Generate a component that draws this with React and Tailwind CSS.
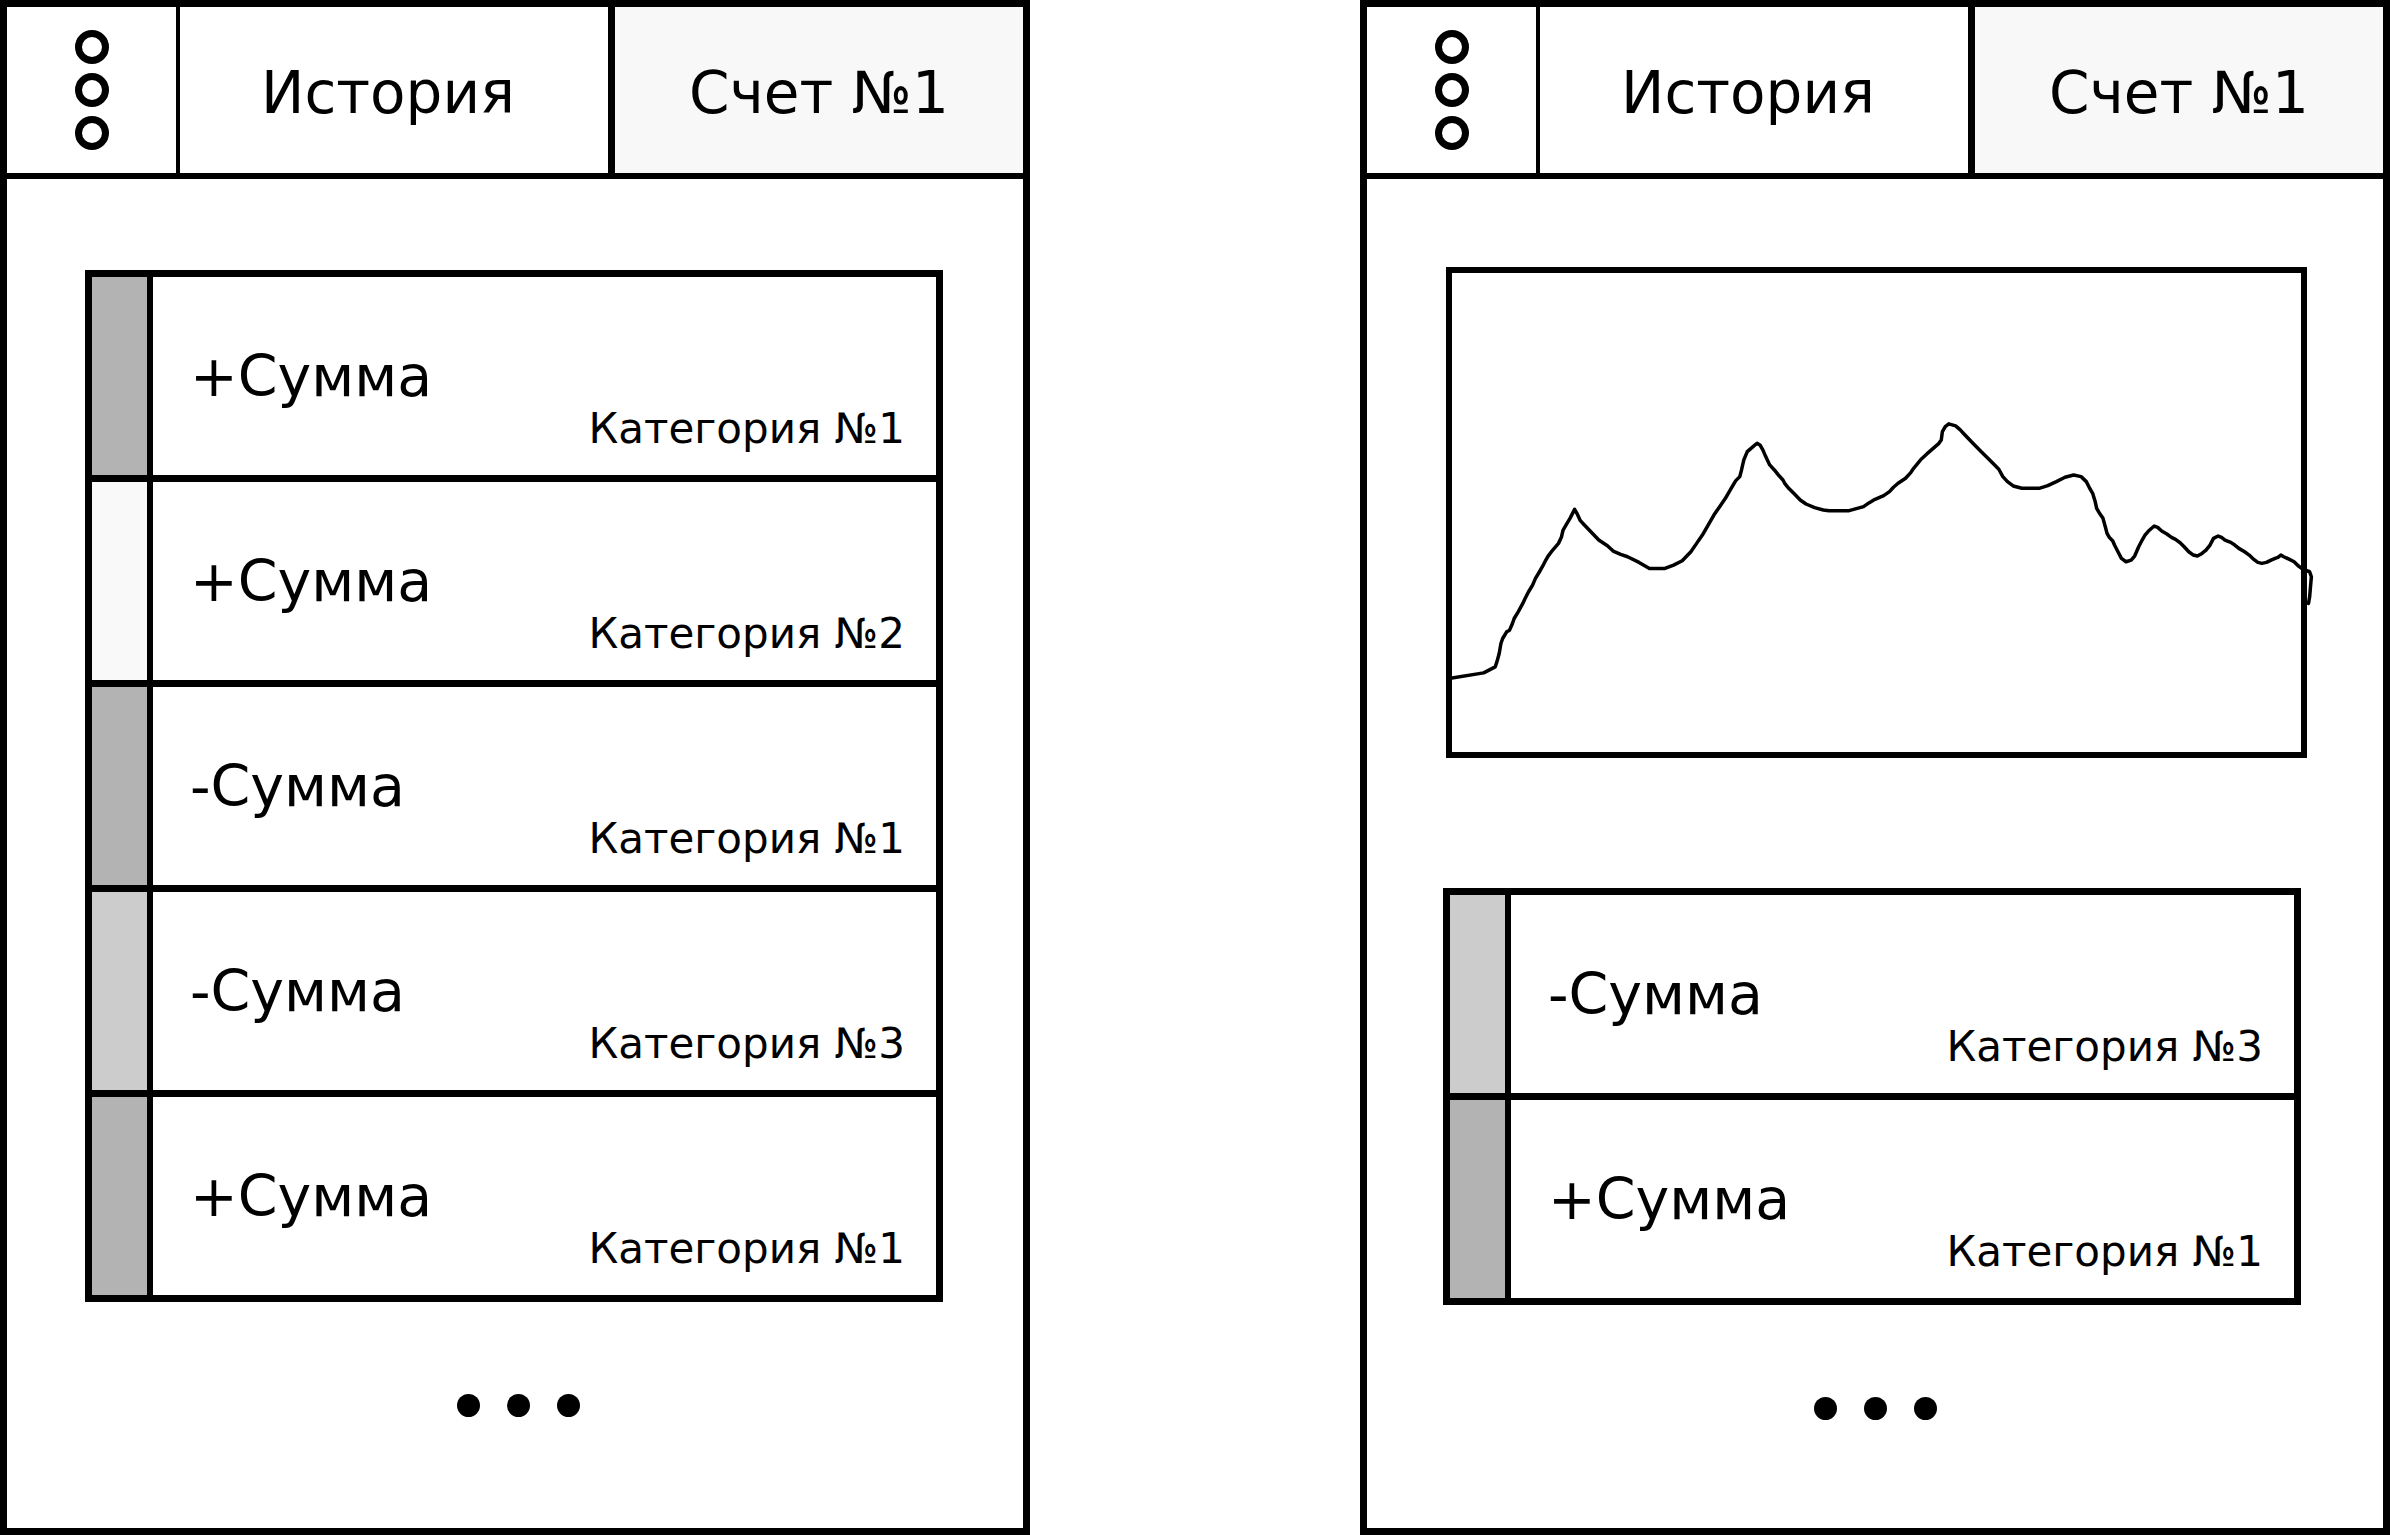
const font = { fontFamily: '"DejaVu Sans", Verdana, sans-serif' };

// points traced from the mockup, in the chart's own coordinate box
const chartPoints = [
  [55, 1283], [110, 1268], [130, 1250], [133, 1235], [137, 1210], [140, 1180], [143, 1165], [150, 1145],
  [155, 1140], [160, 1120], [163, 1105], [170, 1085], [178, 1060], [182, 1045], [188, 1025], [195, 1005],
  [200, 985], [207, 965], [212, 950], [218, 930], [222, 918], [230, 900], [240, 880], [245, 862],
  [248, 840], [253, 825], [260, 805], [268, 778], [272, 790], [278, 812], [285, 825], [300, 852],
  [310, 870], [325, 887], [335, 903], [348, 913], [360, 920], [380, 937], [398, 955], [425, 955],
  [440, 945], [455, 932], [470, 905], [480, 880], [490, 855], [500, 825], [510, 795], [520, 770],
  [530, 745], [540, 715], [548, 692], [555, 680], [558, 660], [562, 630], [568, 605], [578, 590],
  [585, 580], [590, 585], [595, 600], [600, 620], [607, 645], [615, 660], [622, 675], [630, 690],
  [633, 700], [640, 715], [650, 732], [660, 750], [670, 762], [685, 773], [700, 780], [710, 782],
  [745, 782], [770, 770], [780, 758], [790, 748], [805, 737], [815, 725], [822, 712], [830, 700],
  [843, 685], [852, 668], [857, 655], [862, 645], [870, 628], [880, 612], [890, 597], [900, 582],
  [905, 570], [907, 545], [912, 530], [918, 522], [930, 528], [938, 540], [945, 553], [960, 580],
  [975, 606], [990, 632], [1005, 658], [1012, 680], [1020, 695], [1030, 708], [1045, 715], [1075, 715],
  [1090, 707], [1105, 695], [1120, 682], [1135, 675], [1148, 680], [1157, 695], [1162, 712], [1168, 730],
  [1172, 752], [1175, 775], [1180, 790], [1186, 805], [1190, 830], [1193, 850], [1197, 862], [1203, 873],
  [1206, 885], [1212, 905], [1218, 925], [1226, 935], [1235, 930], [1241, 918], [1248, 890], [1254, 870],
  [1259, 855], [1265, 843], [1275, 828], [1281, 832], [1288, 843], [1297, 852], [1305, 862], [1312, 868],
  [1320, 878], [1327, 890], [1335, 905], [1343, 915], [1350, 918], [1358, 910], [1365, 900], [1372, 885],
  [1378, 865], [1386, 858], [1392, 862], [1398, 870], [1408, 877], [1415, 885], [1422, 895], [1432, 905],
  [1440, 915], [1448, 928], [1455, 937], [1462, 940], [1470, 937], [1478, 930], [1485, 925], [1490, 922],
  [1495, 915], [1500, 920], [1510, 928], [1518, 935], [1525, 947], [1533, 957], [1545, 965], [1548, 980],
  [1545, 1040], [1543, 1060],
];

const leftRows = [
  { amount: "+Сумма", category: "Категория №1", color: "bg-[#b3b3b3]" },
  { amount: "+Сумма", category: "Категория №2", color: "bg-[#f9f9f9]" },
  { amount: "-Сумма", category: "Категория №1", color: "bg-[#b3b3b3]" },
  { amount: "-Сумма", category: "Категория №3", color: "bg-[#cccccc]" },
  { amount: "+Сумма", category: "Категория №1", color: "bg-[#b3b3b3]" },
];

const rightRows = [
  { amount: "-Сумма", category: "Категория №3", color: "bg-[#cccccc]" },
  { amount: "+Сумма", category: "Категория №1", color: "bg-[#b3b3b3]" },
];

function MenuIcon() {
  return (
    <div className="flex flex-col items-center gap-[9px]">
      <span className="w-[34px] h-[34px] rounded-full border-[7px] border-black" />
      <span className="w-[34px] h-[34px] rounded-full border-[7px] border-black" />
      <span className="w-[34px] h-[34px] rounded-full border-[7px] border-black" />
    </div>
  );
}

function Header() {
  return (
    <div className="flex h-[172px] border-b-[6px] border-black shrink-0">
      <div className="w-[173px] border-r-[4px] border-black flex items-center justify-center">
        <MenuIcon />
      </div>
      <div className="flex-1 border-r-[7px] border-black flex items-center justify-center pt-[6px] pr-[12px]">
        <span className="text-[58px] leading-none">История</span>
      </div>
      <div className="w-[408px] bg-[#f8f8f8] flex items-center justify-center pt-[6px] shadow-[0_2px_0_0_#000]">
        <span className="text-[58px] leading-none">Счет №1</span>
      </div>
    </div>
  );
}

function Row({ row, first }) {
  return (
    <div className={`flex h-[198px] ${first ? "" : "border-t-[7px] border-black"} box-content`}>
      <div className={`w-[61px] shrink-0 border-r-[6px] border-black ${row.color}`} />
      <div className="flex-1 flex flex-col justify-between pt-[71px] pb-[25px] pl-[37px] pr-[31px]">
        <span className="text-[57px] leading-none">{row.amount}</span>
        <span className="text-[42px] leading-none self-end">{row.category}</span>
      </div>
    </div>
  );
}

function Card({ rows }) {
  return (
    <div className="w-[858px] border-[7px] border-black">
      {rows.map((row, i) => (
        <Row key={i} row={row} first={i === 0} />
      ))}
    </div>
  );
}

function Dots() {
  return (
    <div className="flex justify-center gap-[27px]">
      <span className="w-[23px] h-[23px] rounded-full bg-black" />
      <span className="w-[23px] h-[23px] rounded-full bg-black" />
      <span className="w-[23px] h-[23px] rounded-full bg-black" />
    </div>
  );
}

function Chart() {
  const pts = chartPoints.map((p) => p.join(",")).join(" ");
  return (
    <div className="w-[861px] h-[491px] border-[6px] border-black ml-px">
      <svg
        className="block w-full h-full overflow-visible"
        viewBox="55 70 1475 1435"
        preserveAspectRatio="none"
      >
        <polyline
          points={pts}
          fill="none"
          stroke="black"
          strokeWidth="3.5"
          strokeLinejoin="round"
          strokeLinecap="round"
          vectorEffect="non-scaling-stroke"
        />
      </svg>
    </div>
  );
}

export default function App() {
  return (
    <div className="w-[2392px] h-[1535px] bg-white flex gap-[330px] text-black" style={font}>
      <div className="w-[1030px] h-[1535px] border-[7px] border-black flex flex-col">
        <Header />
        <div className="pl-[78px] pt-[91px]">
          <Card rows={leftRows} />
        </div>
        <div className="pt-[92px] pl-[6px]">
          <Dots />
        </div>
      </div>

      <div className="w-[1030px] h-[1535px] border-[7px] border-black flex flex-col">
        <Header />
        <div className="pl-[78px] pt-[88px]">
          <Chart />
        </div>
        <div className="pl-[76px] pt-[130px]">
          <Card rows={rightRows} />
        </div>
        <div className="pt-[92px]">
          <Dots />
        </div>
      </div>
    </div>
  );
}
